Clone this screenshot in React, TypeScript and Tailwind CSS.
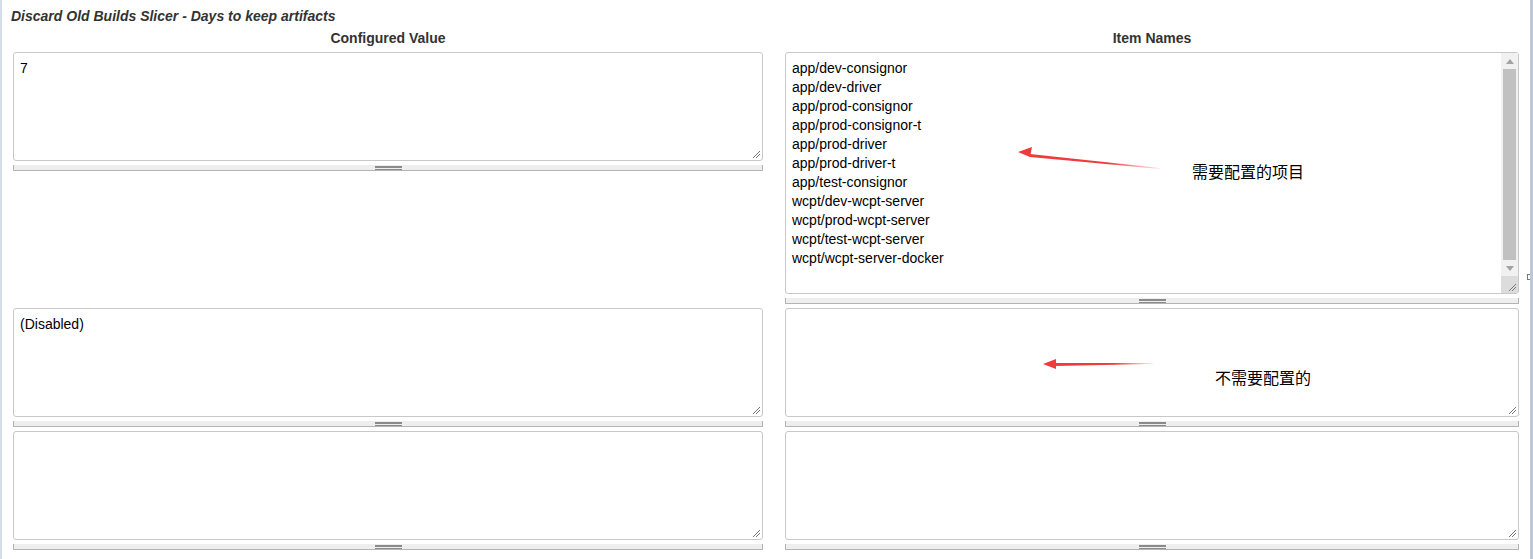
import React from 'react';

const items = [
  'app/dev-consignor',
  'app/dev-driver',
  'app/prod-consignor',
  'app/prod-consignor-t',
  'app/prod-driver',
  'app/prod-driver-t',
  'app/test-consignor',
  'wcpt/dev-wcpt-server',
  'wcpt/prod-wcpt-server',
  'wcpt/test-wcpt-server',
  'wcpt/wcpt-server-docker',
];

function Grip() {
  return (
    <svg width="10" height="10" viewBox="0 0 10 10" className="absolute right-[1px] bottom-[1px]">
      <line x1="9" y1="2" x2="2" y2="9" stroke="#777" strokeWidth="1" />
      <line x1="9" y1="5" x2="5" y2="9" stroke="#777" strokeWidth="1" />
    </svg>
  );
}

function ResizeBar() {
  return (
    <div className="mt-[4px] h-[6px] bg-[#eeeeee] border-l border-r border-b border-[#b4b4b4] flex justify-center">
      <div className="w-[27px] h-[4px] border-t-2 border-b-0 border-[#8a8a8a] mt-[1px] flex flex-col">
        <div className="h-[1px] mt-[1px] bg-[#8a8a8a]" />
      </div>
    </div>
  );
}

function Box({ h, lines, scroll }: { h: string; lines?: string[]; scroll?: boolean }) {
  return (
    <div>
      <div className={`relative ${h} bg-white border border-[#c8c8c8] rounded-[3px]`}>
        <div className="pl-[6px] pt-[6px] text-[14px] leading-[19px] text-black">
          {lines?.map((l) => (
            <div key={l}>{l}</div>
          ))}
        </div>
        {scroll ? (
          <div className="absolute right-0 top-0 bottom-0 w-[17px] bg-[#f1f1f1] flex flex-col">
            <div className="h-[16px] flex items-center justify-center">
              <svg width="8" height="5" viewBox="0 0 8 5">
                <polygon points="4,0 8,5 0,5" fill="#a3a3a3" />
              </svg>
            </div>
            <div className="mx-[2px] flex-1 bg-[#c1c1c1]" />
            <div className="h-[16px] flex items-center justify-center">
              <svg width="8" height="5" viewBox="0 0 8 5">
                <polygon points="0,0 8,0 4,5" fill="#a3a3a3" />
              </svg>
            </div>
            <div className="relative h-[17px] bg-[#dcdcdc]">
              <Grip />
            </div>
          </div>
        ) : (
          <Grip />
        )}
      </div>
      <ResizeBar />
    </div>
  );
}

export default function App() {
  return (
    <div className="relative w-[1533px] h-[559px] overflow-hidden bg-white font-['Liberation_Sans',Arial,sans-serif] text-[#333]">
      <div className="absolute left-0 top-0 bottom-0 w-[2px] bg-[#d5dde9]" />
      <div className="absolute right-0 top-0 bottom-0 w-[3px] bg-[#bcc7d9]" />
      <div className="absolute right-[3px] top-[274px] w-[3px] h-[6px] border border-r-0 border-[#6b7d6b]" />

      <div className="pl-[11px] pt-[8px] text-[14px] leading-[16px] font-bold italic">
        Discard Old Builds Slicer - Days to keep artifacts
      </div>

      <div className="pl-[13px] grid grid-cols-[750px_734px] gap-x-[22px]">
        <div className="text-center text-[14px] font-bold leading-[16px] mt-[6px] mb-[6px]">Configured Value</div>
        <div className="text-center text-[14px] font-bold leading-[16px] mt-[6px] mb-[6px]">Item Names</div>

        <div className="pb-[4px]">
          <Box h="h-[109px]" lines={['7']} />
        </div>
        <div className="pb-[4px]">
          <Box h="h-[242px]" lines={items} scroll />
        </div>

        <div className="pb-[4px]">
          <Box h="h-[109px]" lines={['(Disabled)']} />
        </div>
        <div className="pb-[4px]">
          <Box h="h-[109px]" />
        </div>

        <div className="pb-[4px]">
          <Box h="h-[109px]" />
        </div>
        <div className="pb-[4px]">
          <Box h="h-[109px]" />
        </div>
      </div>

      {/* annotations */}
      <svg className="absolute left-0 top-0 pointer-events-none" width="1533" height="559">
        <defs>
          <linearGradient id="g1" x1="1" y1="0" x2="0" y2="0">
            <stop offset="0" stopColor="#ef3b3b" stopOpacity="0.1" />
            <stop offset="0.4" stopColor="#ef3b3b" />
            <stop offset="1" stopColor="#ef3b3b" />
          </linearGradient>
        </defs>
        <polygon points="1160,168 1030,154 1030,157 1160,169" fill="url(#g1)" />
        <polygon points="1018,152 1032,147 1030,157" fill="#ef3b3b" />
        <polygon points="1153,363 1055,363 1055,366 1153,364" fill="url(#g1)" />
        <polygon points="1043,364 1056,359 1056,369" fill="#ef3b3b" />
      </svg>
      <div className="absolute left-[1192px] top-[161px] text-[16px] leading-[20px] text-black font-['Noto_Sans_CJK_SC',sans-serif]">
        需要配置的项目
      </div>
      <div className="absolute left-[1215px] top-[367px] text-[16px] leading-[20px] text-black font-['Noto_Sans_CJK_SC',sans-serif]">
        不需要配置的
      </div>
    </div>
  );
}
